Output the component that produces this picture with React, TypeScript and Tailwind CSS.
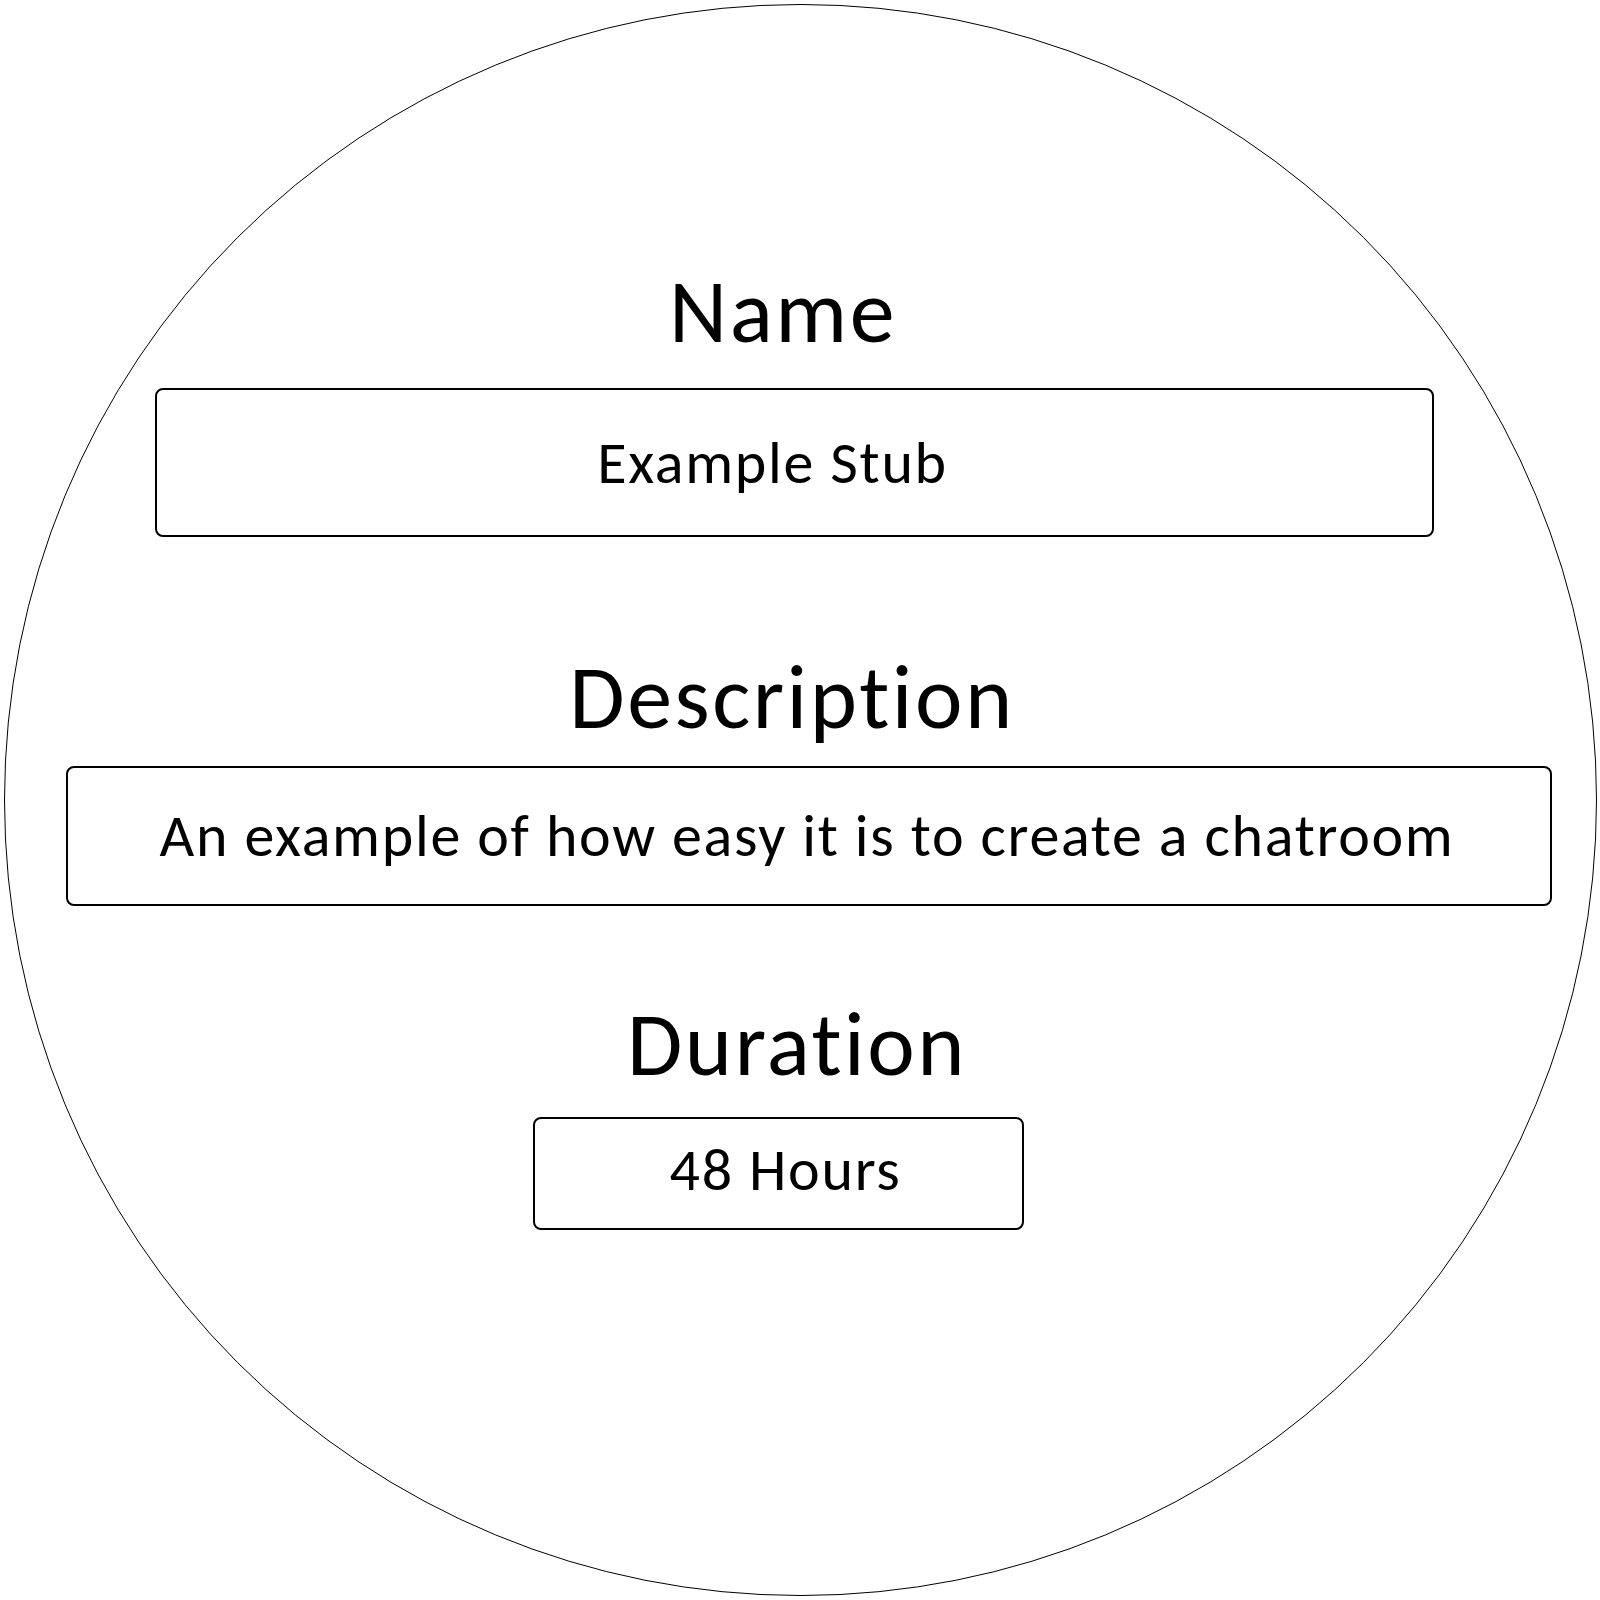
export default function App() {
  return (
    <div className="w-[1600px] h-[1600px] bg-white flex items-center justify-center font-['Carlito','Lato',sans-serif] text-black">
      {/* Round card */}
      <div className="w-[1593px] h-[1592px] rounded-full border border-black flex flex-col items-center pt-[261px]">
        <h2 className="text-[90px] leading-[90px] tracking-[2.5px] ml-[-34px]">Name</h2>
        <div className="mt-[32px] w-[1279px] h-[149px] ml-[-11px] border-2 border-black rounded-lg flex items-center justify-center">
          <span className="text-[60px] leading-[60px] tracking-[1.7px] mr-[44px]">Example Stub</span>
        </div>

        <h2 className="mt-[115px] text-[90px] leading-[90px] tracking-[2.5px] ml-[-16px]">Description</h2>
        <div className="mt-[24px] w-[1486px] h-[140px] ml-[18px] border-2 border-black rounded-lg flex items-center justify-center">
          <span className="text-[60px] leading-[60px] tracking-[1.7px] mr-[4px]">An example of how easy it is to create a chatroom</span>
        </div>

        <h2 className="mt-[93px] text-[90px] leading-[90px] tracking-[2.5px] ml-[-6px]">Duration</h2>
        <div className="mt-[28px] w-[491px] h-[113px] ml-[-43px] border-2 border-black rounded-lg flex items-center justify-center pb-[8px]">
          <span className="text-[60px] leading-[60px] tracking-[1.7px] ml-[14px]">48 Hours</span>
        </div>
      </div>
    </div>
  );
}
